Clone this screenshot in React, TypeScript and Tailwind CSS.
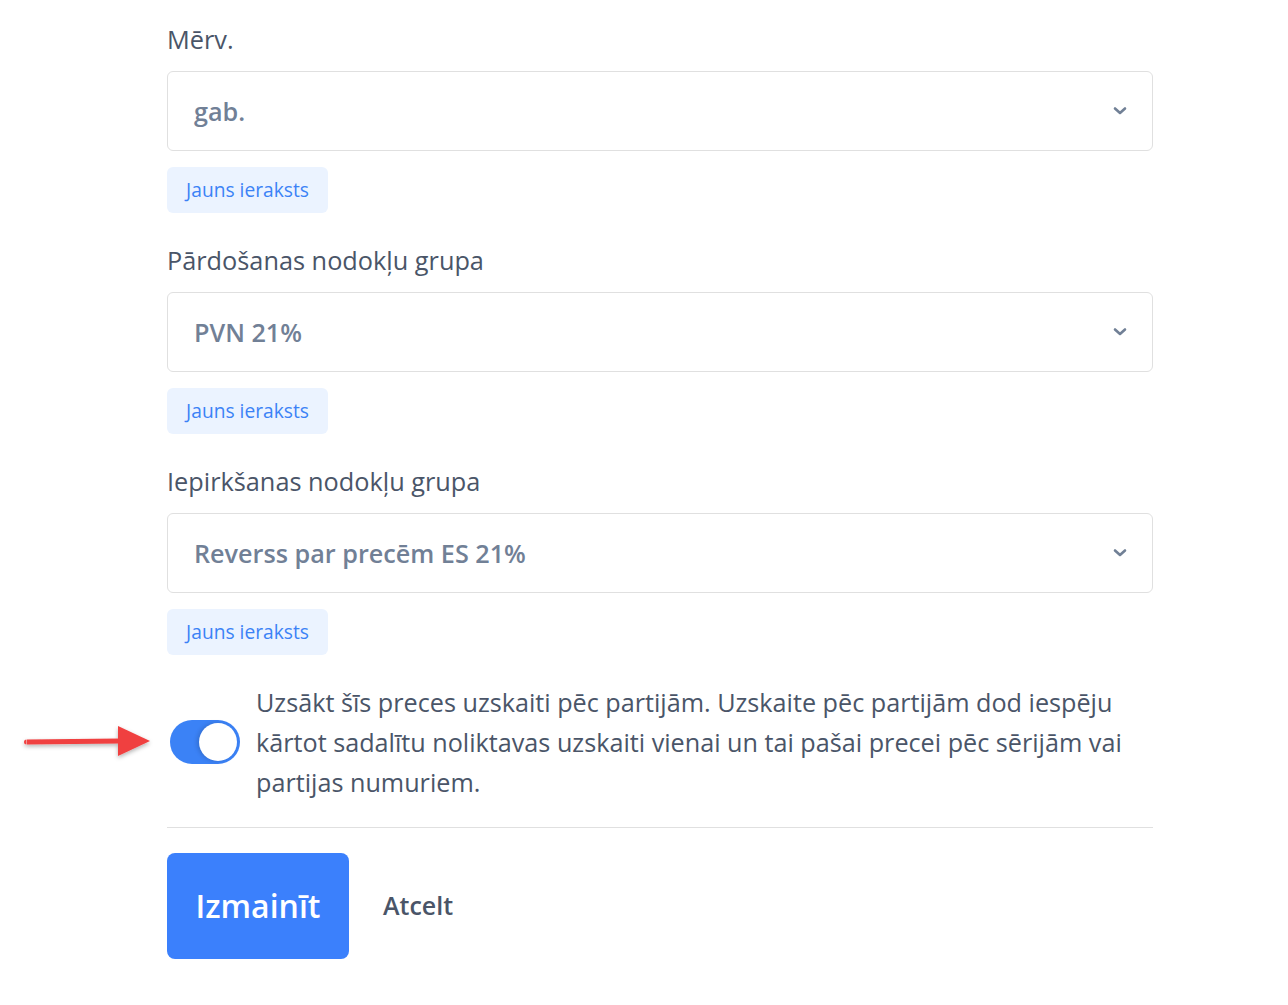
import React, { useState } from 'react';

const font = { fontFamily: '"Open Sans", "Liberation Sans", sans-serif' };

const Chevron = () => (
  <svg width="14" height="10" viewBox="0 0 14 10" className="text-[#718096]">
    <path d="M2 2.5 L7 7 L12 2.5" fill="none" stroke="currentColor" strokeWidth="2.6" strokeLinecap="round" strokeLinejoin="round" />
  </svg>
);

interface FieldProps {
  label: string;
  value: string;
  first?: boolean;
}

const SelectField: React.FC<FieldProps> = ({ label, value, first }) => (
  <div className={first ? '' : 'mt-[29px]'}>
    <div className="h-9 leading-9 text-[25.3px] text-[#4a5568] mb-[14px]">{label}</div>
    <div className="h-20 border border-[#e0e0e0] rounded-md bg-white flex items-center justify-between pl-[26px] pr-[25px]">
      <span className="pt-[2px] text-[25.2px] font-semibold text-[#718096]">{value}</span>
      <Chevron />
    </div>
    <button className="mt-4 h-[46px] w-[161px] rounded-md bg-[#ebf3ff] text-[#3b82f6] text-[19.2px]">
      Jauns ieraksts
    </button>
  </div>
);

const Arrow = () => (
  <svg width="140" height="44" viewBox="0 0 140 44" className="absolute left-[20px] top-1/2 -translate-y-1/2">
    <defs>
      <filter id="sh" x="-10%" y="-30%" width="120%" height="160%">
        <feDropShadow dx="0" dy="2" stdDeviation="2" floodColor="#000" floodOpacity="0.3" />
      </filter>
    </defs>
    <g filter="url(#sh)">
      <path d="M7 19.5 L100 18.5 L100 23.5 L7 24.5 Z" fill="#f04040" />
      <path d="M6.5 19.5 a2.5 2.5 0 0 0 0 5" fill="#f04040" />
      <path d="M98 6 L130 21 L98 36 Z" fill="#f04040" />
    </g>
  </svg>
);

export default function App() {
  const [on, setOn] = useState(true);
  return (
    <div className="min-h-screen bg-white" style={font}>
      <div className="relative w-[986px] ml-[167px] pt-[21px] pb-10">
        <SelectField first label="Mērv." value="gab." />
        <SelectField label="Pārdošanas nodokļu grupa" value="PVN 21%" />
        <SelectField label="Iepirkšanas nodokļu grupa" value="Reverss par precēm ES 21%" />

        <div className="relative mt-[27px]">
          <div className="absolute right-full mr-[-3px] top-0 bottom-0 w-[170px]">
            <Arrow />
          </div>
          <div className="flex items-center gap-4 pl-[3px]">
            <button
              onClick={() => setOn(!on)}
              className={`shrink-0 w-[70px] h-[44px] rounded-full flex items-center px-[3px] ${on ? 'bg-[#3b82f6] justify-end' : 'bg-gray-300 justify-start'}`}
            >
              <span className="block w-[38px] h-[38px] rounded-full bg-white shadow-[-2px_0_4px_rgba(0,0,0,0.15)]" />
            </button>
            <p className="text-[25.2px] leading-10 text-[#4a5568]">
              Uzsākt šīs preces uzskaiti pēc partijām. Uzskaite pēc partijām dod iespēju kārtot sadalītu noliktavas uzskaiti vienai un tai pašai precei pēc sērijām vai partijas numuriem.
            </p>
          </div>
        </div>

        <div className="mt-[25px] border-t border-[#e0e0e0]" />

        <div className="mt-[25px] flex items-center">
          <button className="h-[106px] w-[182px] rounded-lg bg-[#3b80fc] text-white text-[32px] font-semibold">
            Izmainīt
          </button>
          <button className="ml-[34px] text-[25px] font-semibold text-[#4a5568]">Atcelt</button>
        </div>
      </div>
    </div>
  );
}
